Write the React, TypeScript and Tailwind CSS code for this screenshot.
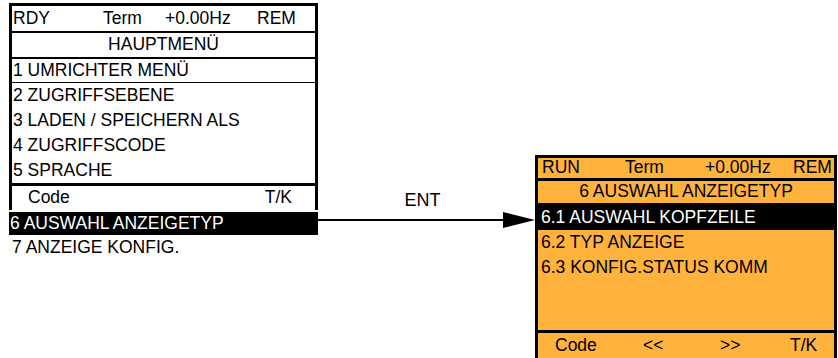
import React from 'react';

const font = { fontFamily: '"Liberation Sans", Arial, sans-serif' };

const menuRows = ['1 UMRICHTER MENÜ', '2 ZUGRIFFSEBENE', '3 LADEN / SPEICHERN ALS', '4 ZUGRIFFSCODE', '5 SPRACHE'];
const subRows = ['6.2 TYP ANZEIGE', '6.3 KONFIG.STATUS KOMM'];

const App: React.FC = () => {
  return (
    <div className="w-[838px] h-[358px] bg-white overflow-hidden flex items-start text-[17.5px] text-black leading-none" style={font}>
      {/* Hauptmenü (Terminal) */}
      <div className="ml-[9px] mt-[3px] w-[309px] shrink-0">
        <div className="border-[3px] border-b-0 border-black">
          <div className="h-[25px] flex items-center pl-[1px]">
            <span className="w-[90px]">RDY</span>
            <span className="w-[62px]">Term</span>
            <span className="w-[92px]">+0.00Hz</span>
            <span>REM</span>
          </div>
          <div className="h-[2px] bg-black" />
          <div className="h-[24px] flex items-center justify-center">HAUPTMENÜ</div>
          <div className="h-[2px] bg-black" />
          <div className="h-[23px] flex items-center pl-[1px]">{menuRows[0]}</div>
          <div className="h-px bg-black" />
          {menuRows.slice(1).map((r) => (
            <div key={r} className="h-[25px] flex items-center pl-[1px]">{r}</div>
          ))}
          <div className="h-[3px] bg-black" />
          <div className="h-[24px] flex items-center justify-between pl-[16px] pr-[23px]">
            <span>Code</span>
            <span>T/K</span>
          </div>
        </div>
        <div className="mt-[2px] h-[23px] bg-black text-white flex items-center pl-[1px]">6 AUSWAHL ANZEIGETYP</div>
        <div className="h-[25px] flex items-center pl-[3px]">7 ANZEIGE KONFIG.</div>
      </div>

      {/* ENT Pfeil */}
      <div className="w-[217px] shrink-0 mt-[189px] flex flex-col">
        <div className="h-[21px] text-[18px] flex items-center justify-center pr-[8px]">ENT</div>
        <svg width="217" height="17" viewBox="0 0 217 17" className="mt-[2px] block">
          <rect x="0" y="7" width="190" height="2" fill="#000" />
          <polygon points="185,0 217,8 185,16" fill="#000" />
        </svg>
      </div>

      {/* Untermenü */}
      <div className="mt-[155px] w-[302px] shrink-0 border-[3px] border-b-0 border-black bg-[#ffb33c]">
        <div className="h-[20px] flex items-center pl-[4px]">
          <span className="w-[83px]">RUN</span>
          <span className="w-[80px]">Term</span>
          <span className="w-[88px]">+0.00Hz</span>
          <span>REM</span>
        </div>
        <div className="h-[3px] bg-black" />
        <div className="h-[22px] flex items-center justify-center">6 AUSWAHL ANZEIGETYP</div>
        <div className="h-[3px] bg-black" />
        <div className="h-[24px] bg-black text-white flex items-center pl-[3px]">6.1 AUSWAHL KOPFZEILE</div>
        <div className="h-[50px] flex flex-col">
          {subRows.map((r) => (
            <div key={r} className="h-[25px] flex items-center pl-[3px]">{r}</div>
          ))}
        </div>
        <div className="h-[50px]" />
        <div className="h-[3px] bg-black" />
        <div className="h-[25px] flex items-center pl-[17px]">
          <span className="w-[88px]">Code</span>
          <span className="w-[77px]">&lt;&lt;</span>
          <span className="w-[70px]">&gt;&gt;</span>
          <span>T/K</span>
        </div>
      </div>
    </div>
  );
};

export default App;
